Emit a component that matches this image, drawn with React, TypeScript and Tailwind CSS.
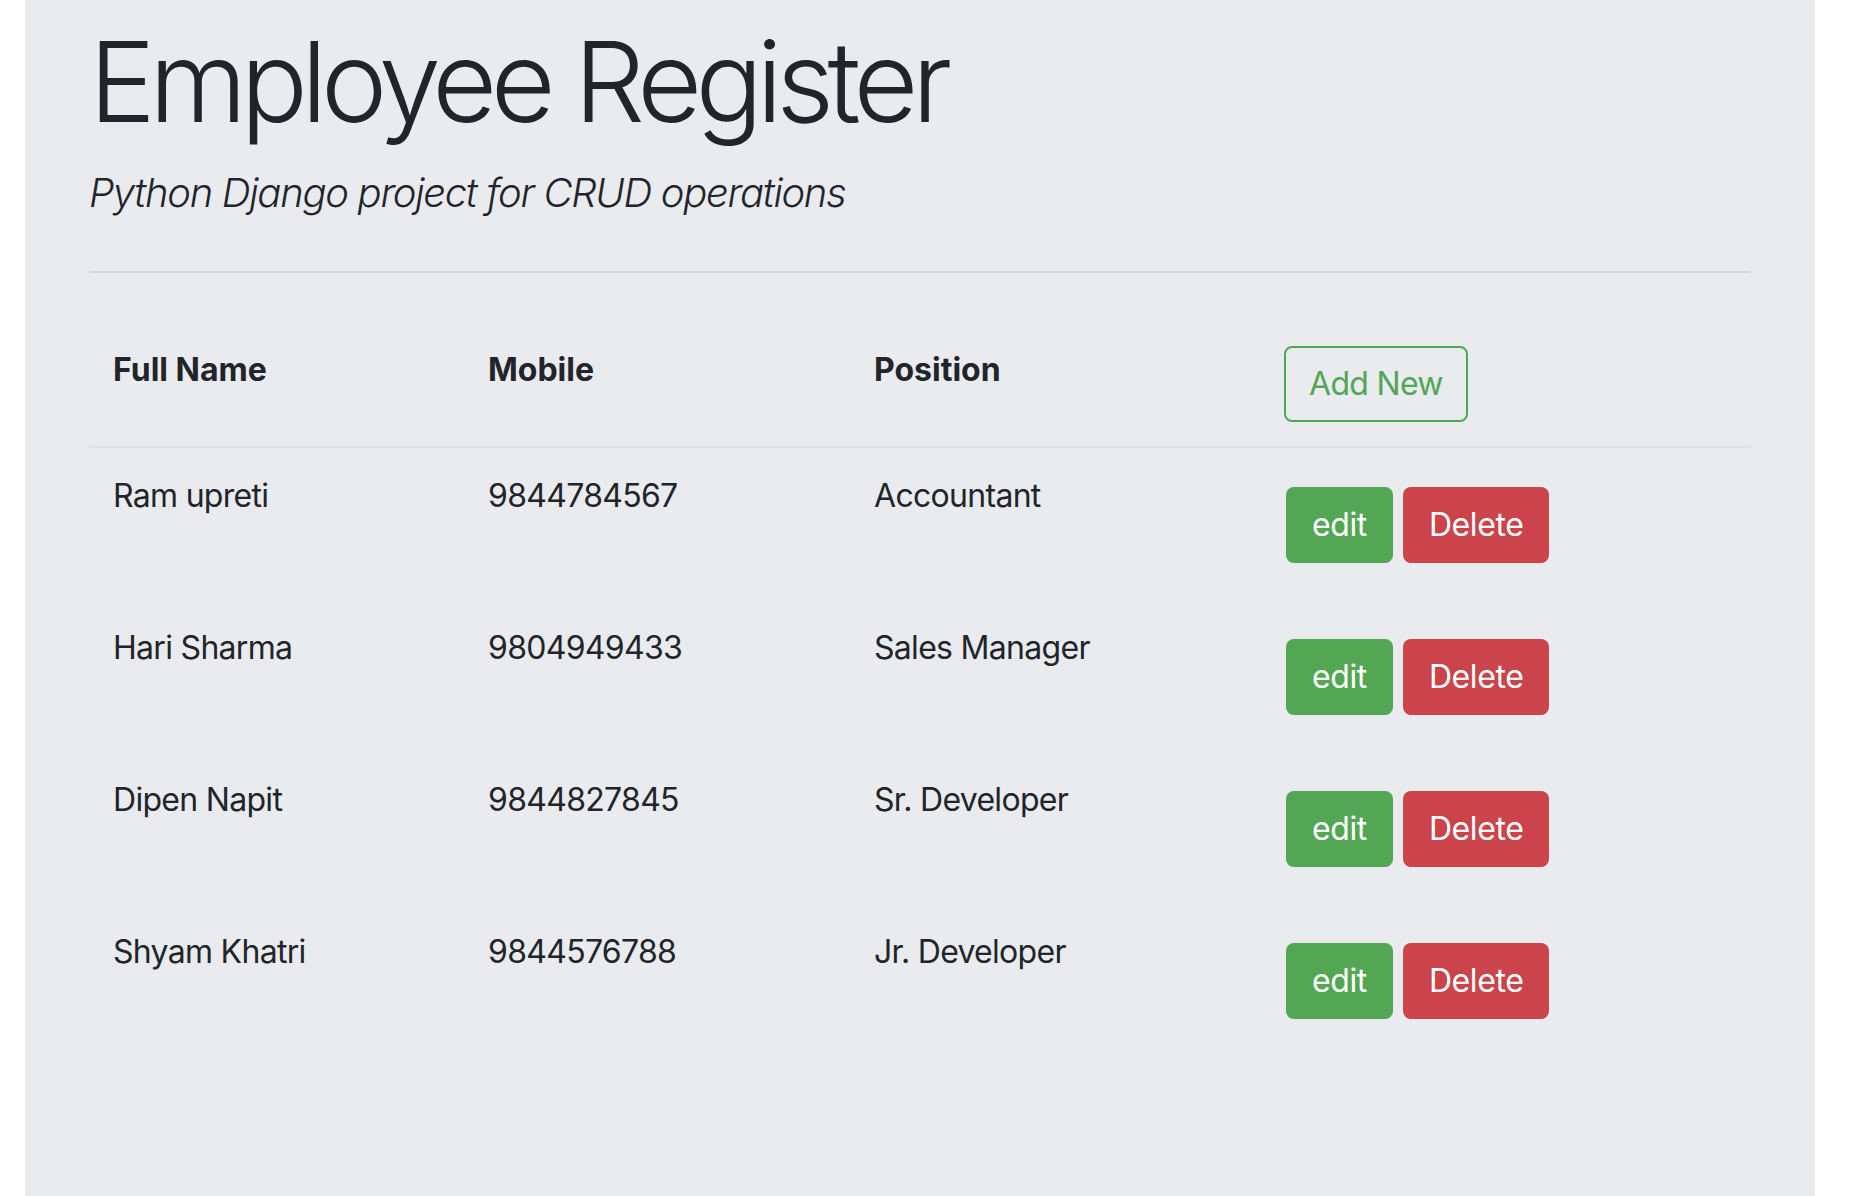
import React from "react";

type Employee = {
  name: string;
  mobile: string;
  position: string;
};

const employees: Employee[] = [
  { name: "Ram upreti", mobile: "9844784567", position: "Accountant" },
  { name: "Hari Sharma", mobile: "9804949433", position: "Sales Manager" },
  { name: "Dipen Napit", mobile: "9844827845", position: "Sr. Developer" },
  { name: "Shyam Khatri", mobile: "9844576788", position: "Jr. Developer" },
];

export default function App() {
  return (
    <div
      className="min-h-screen bg-white text-[#212529]"
      style={{ fontFamily: "Inter, 'Noto Sans', sans-serif" }}
    >
      <div className="ml-[25px] w-[1790px] min-h-screen bg-[#e9ebef] px-[64px]">
        {/* heading */}
        <h1 className="pt-[14px] text-[112px] font-light leading-[1.2] tracking-[-6.5px]">
          Employee Register
        </h1>
        <p className="mt-[15px] text-[40px] italic font-light leading-[1.5] tracking-[-1.3px]">
          Python Django project for CRUD operations
        </p>
        <div className="mt-[48px] h-[2px] bg-[#d3d5d8]"></div>

        {/* table */}
        <table className="mt-[49px] w-full border-collapse text-[32px] leading-[48px]">
          <thead>
            <tr className="border-b-2 border-[#dee2e6]">
              <th className="w-[375px] p-[24px] text-left align-top font-bold">Full Name</th>
              <th className="w-[386px] p-[24px] text-left align-top font-bold">Mobile</th>
              <th className="w-[410px] p-[24px] text-left align-top font-bold">Position</th>
              <th className="p-[24px] text-left align-top font-normal">
                <button className="h-[76px] rounded-[8px] border-2 border-[#53a653] px-[23px] tracking-[-0.7px] text-[#53a653]">
                  Add New
                </button>
              </th>
            </tr>
          </thead>
          <tbody className="tracking-[-0.7px]">
            {employees.map((emp, index) => (
              <tr key={index}>
                <td className="p-[24px] align-top">{emp.name}</td>
                <td className="p-[24px] align-top">{emp.mobile}</td>
                <td className="p-[24px] align-top">{emp.position}</td>
                <td className="p-[24px] align-top">
                  <div className="mt-[15px] mb-[13px] ml-[2px] flex gap-[10px] tracking-[-0.4px]">
                    <button className="h-[76px] rounded-[8px] bg-[#53a653] px-[26px] text-white">
                      edit
                    </button>
                    <button className="h-[76px] rounded-[8px] bg-[#cb444b] px-[26px] text-white">
                      Delete
                    </button>
                  </div>
                </td>
              </tr>
            ))}
          </tbody>
        </table>
      </div>
    </div>
  );
}
